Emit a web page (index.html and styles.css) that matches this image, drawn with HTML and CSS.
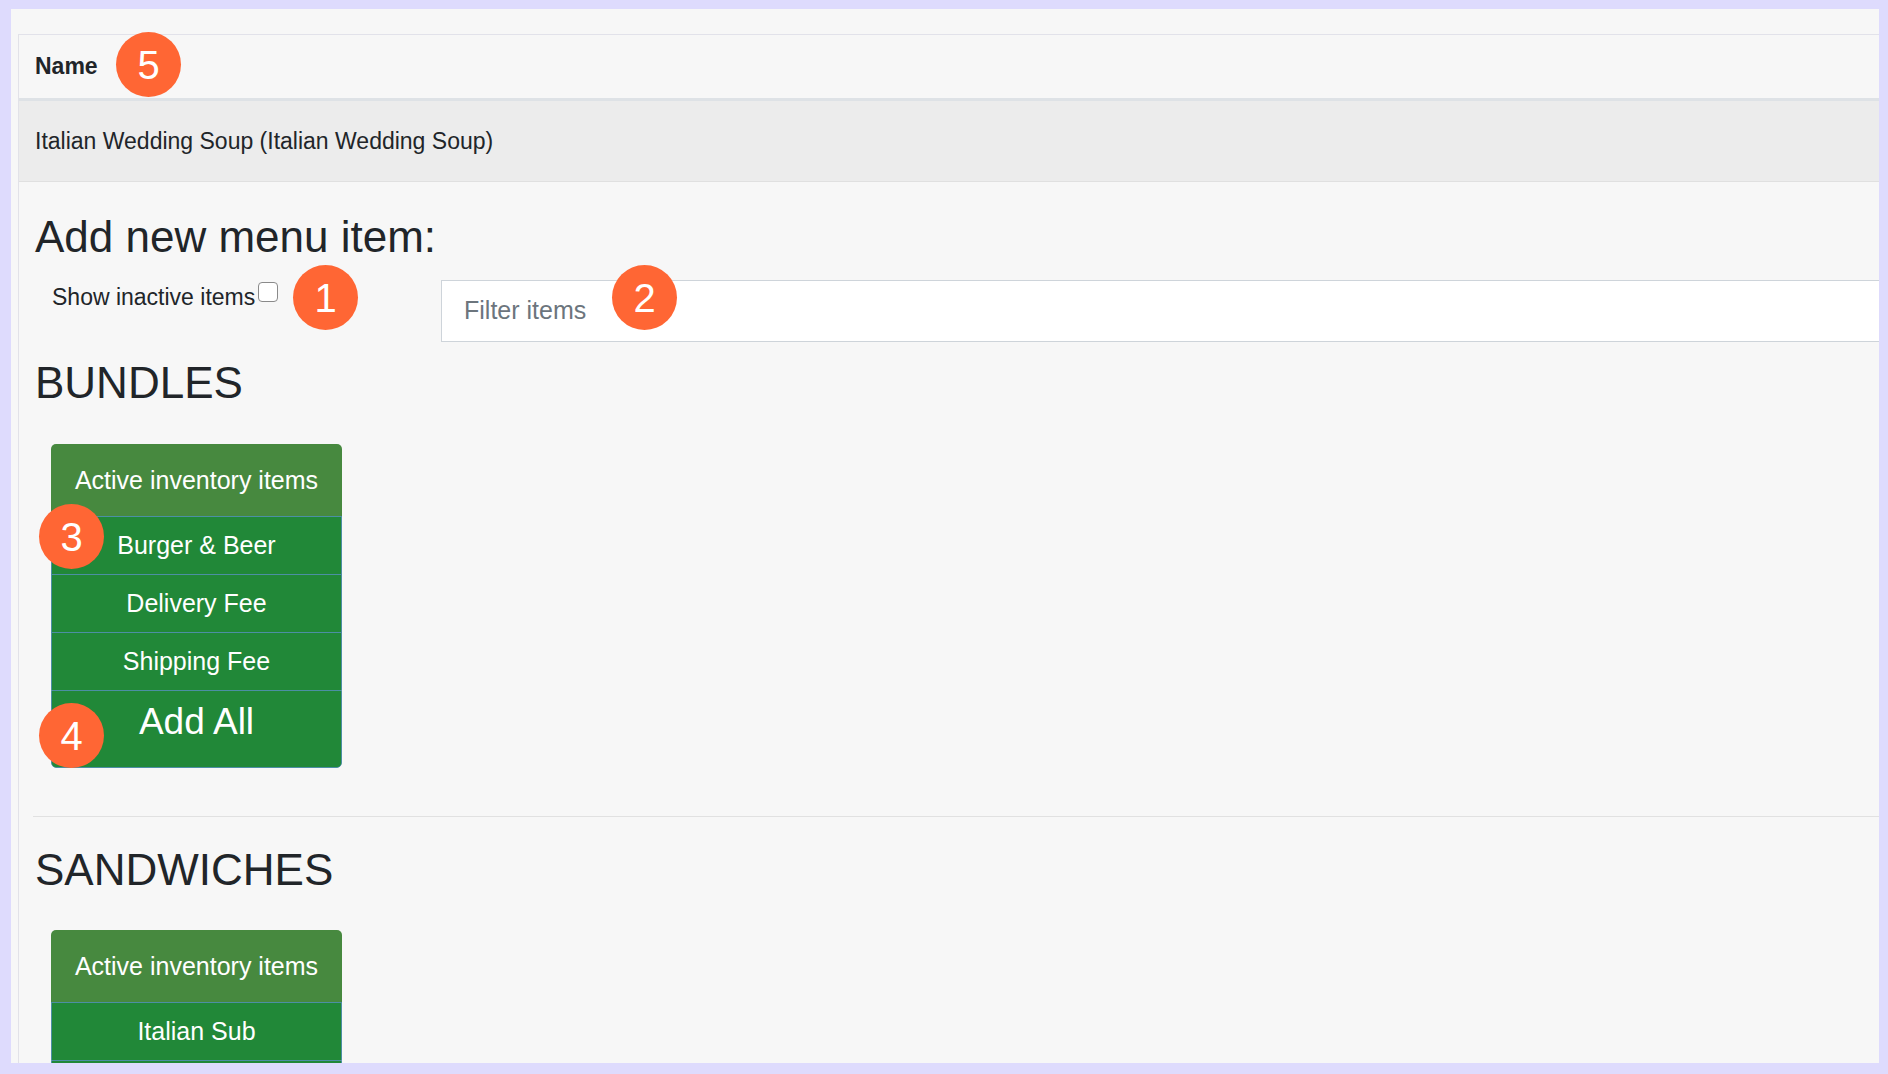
FILE: index.html
```html
<!DOCTYPE html>
<html lang="en">
<head>
<meta charset="utf-8">
<title>Add new menu item</title>
<link rel="stylesheet" href="styles.css">
</head>
<body>
<div class="panel">
  <div class="frame">
    <table class="items-table">
      <thead>
        <tr><th>Name</th></tr>
      </thead>
      <tbody>
        <tr><td>Italian Wedding Soup (Italian Wedding Soup)</td></tr>
      </tbody>
    </table>
    <div class="content">
      <h2 class="title">Add new menu item:</h2>
      <div class="controls">
        <label class="inactive">Show inactive items<input type="checkbox" class="check"></label>
        <input class="filter" type="text" placeholder="Filter items">
      </div>

      <section class="category">
        <h2 class="cat-title">BUNDLES</h2>
        <div class="menu-card">
          <div class="card-head">Active inventory items</div>
          <button class="card-item">Burger &amp; Beer</button>
          <button class="card-item">Delivery Fee</button>
          <button class="card-item">Shipping Fee</button>
          <button class="card-item add-all">Add All</button>
        </div>
      </section>

      <hr class="divider">

      <section class="category">
        <h2 class="cat-title">SANDWICHES</h2>
        <div class="menu-card">
          <div class="card-head">Active inventory items</div>
          <button class="card-item">Italian Sub</button>
          <button class="card-item add-all">Add All</button>
        </div>
      </section>
    </div>
  </div>

  <span class="marker m5">5</span>
  <span class="marker m1">1</span>
  <span class="marker m2">2</span>
  <span class="marker m3">3</span>
  <span class="marker m4">4</span>
</div>
</body>
</html>
```

FILE: styles.css
```css
html, body {
  margin: 0;
  padding: 0;
}

body {
  background: #dedbfd;
  height: 1074px;
  overflow: hidden;
  font-family: "Liberation Sans", Arial, Helvetica, sans-serif;
  color: #212529;
}

.panel {
  position: relative;
  margin: 9px 9px 0 11px;
  height: 1054px;
  overflow: hidden;
  background: #f7f7f7;
}

.frame {
  margin: 25px -40px 0 7px;
  border-top: 1px solid #e2e2ea;
  border-left: 1px solid #e2e2e8;
}

.items-table {
  width: 100%;
  border-collapse: separate;
  border-spacing: 0;
}

.items-table th {
  text-align: left;
  font-size: 23px;
  font-weight: 700;
  line-height: 35px;
  padding: 14px 16px;
  border-bottom: 3px solid #dee2e6;
}

.items-table td {
  font-size: 23px;
  line-height: 35px;
  padding: 23px 16px 22px;
  background: #ececec;
  border-bottom: 1px solid #e0e0e0;
}

.content {
  padding: 0 16px;
}

.title {
  margin: 29px 0 0;
  font-size: 44px;
  font-weight: 400;
  line-height: 52.8px;
}

.controls {
  margin-top: 16px;
  display: flex;
  align-items: flex-start;
}

.inactive {
  flex: 0 0 406px;
  box-sizing: border-box;
  padding-left: 17px;
  font-size: 23px;
  line-height: 34.5px;
}

.check {
  -webkit-appearance: none;
  appearance: none;
  display: inline-block;
  box-sizing: border-box;
  width: 20px;
  height: 20px;
  margin: 2px 0 0 3px;
  vertical-align: top;
  border: 1.5px solid #8a8a8a;
  border-radius: 4px;
  background: #fff;
}

.filter {
  flex: 1;
  height: 62px;
  box-sizing: border-box;
  border: 1px solid #ced4da;
  border-radius: 0;
  padding: 0 22px;
  background: #fff;
  font-family: "Liberation Sans", Arial, Helvetica, sans-serif;
  font-size: 25px;
  color: #495057;
  outline: none;
}

.filter::placeholder {
  color: #6c757d;
}

.cat-title {
  margin: 15px 0 0;
  font-size: 44px;
  font-weight: 400;
  line-height: 52.8px;
}

.menu-card {
  margin: 34px 0 0 16px;
  width: 291px;
  border-radius: 5px;
  overflow: hidden;
}

.card-head {
  height: 72px;
  line-height: 72px;
  text-align: center;
  background: #47893f;
  color: #fff;
  font-size: 25px;
}

.card-item {
  display: block;
  width: 100%;
  height: 58px;
  box-sizing: border-box;
  margin: 0;
  padding: 0;
  border: 1px solid #4c8fa4;
  border-bottom: none;
  background: #218838;
  color: #fff;
  font-family: inherit;
  font-size: 25px;
  text-align: center;
  cursor: pointer;
}

.card-item.add-all {
  height: 78px;
  padding: 3px 0 18px;
  line-height: 55px;
  font-size: 37px;
  border-bottom: 1px solid #4c8fa4;
  border-radius: 0 0 5px 5px;
}

.divider {
  margin: 48px 0 27px -2px;
  height: 0;
  border: 0;
  border-top: 1px solid #e1e1e1;
}

.marker {
  position: absolute;
  width: 65px;
  height: 65px;
  border-radius: 50%;
  background: #ff6634;
  color: #fff;
  font-size: 40px;
  line-height: 1;
  display: flex;
  align-items: center;
  justify-content: center;
}

.m5 { left: 105px; top: 23px; }
.m1 { left: 282px; top: 256px; }
.m2 { left: 601px; top: 256px; }
.m3 { left: 28px; top: 495px; }
.m4 { left: 28px; top: 694px; }
```
